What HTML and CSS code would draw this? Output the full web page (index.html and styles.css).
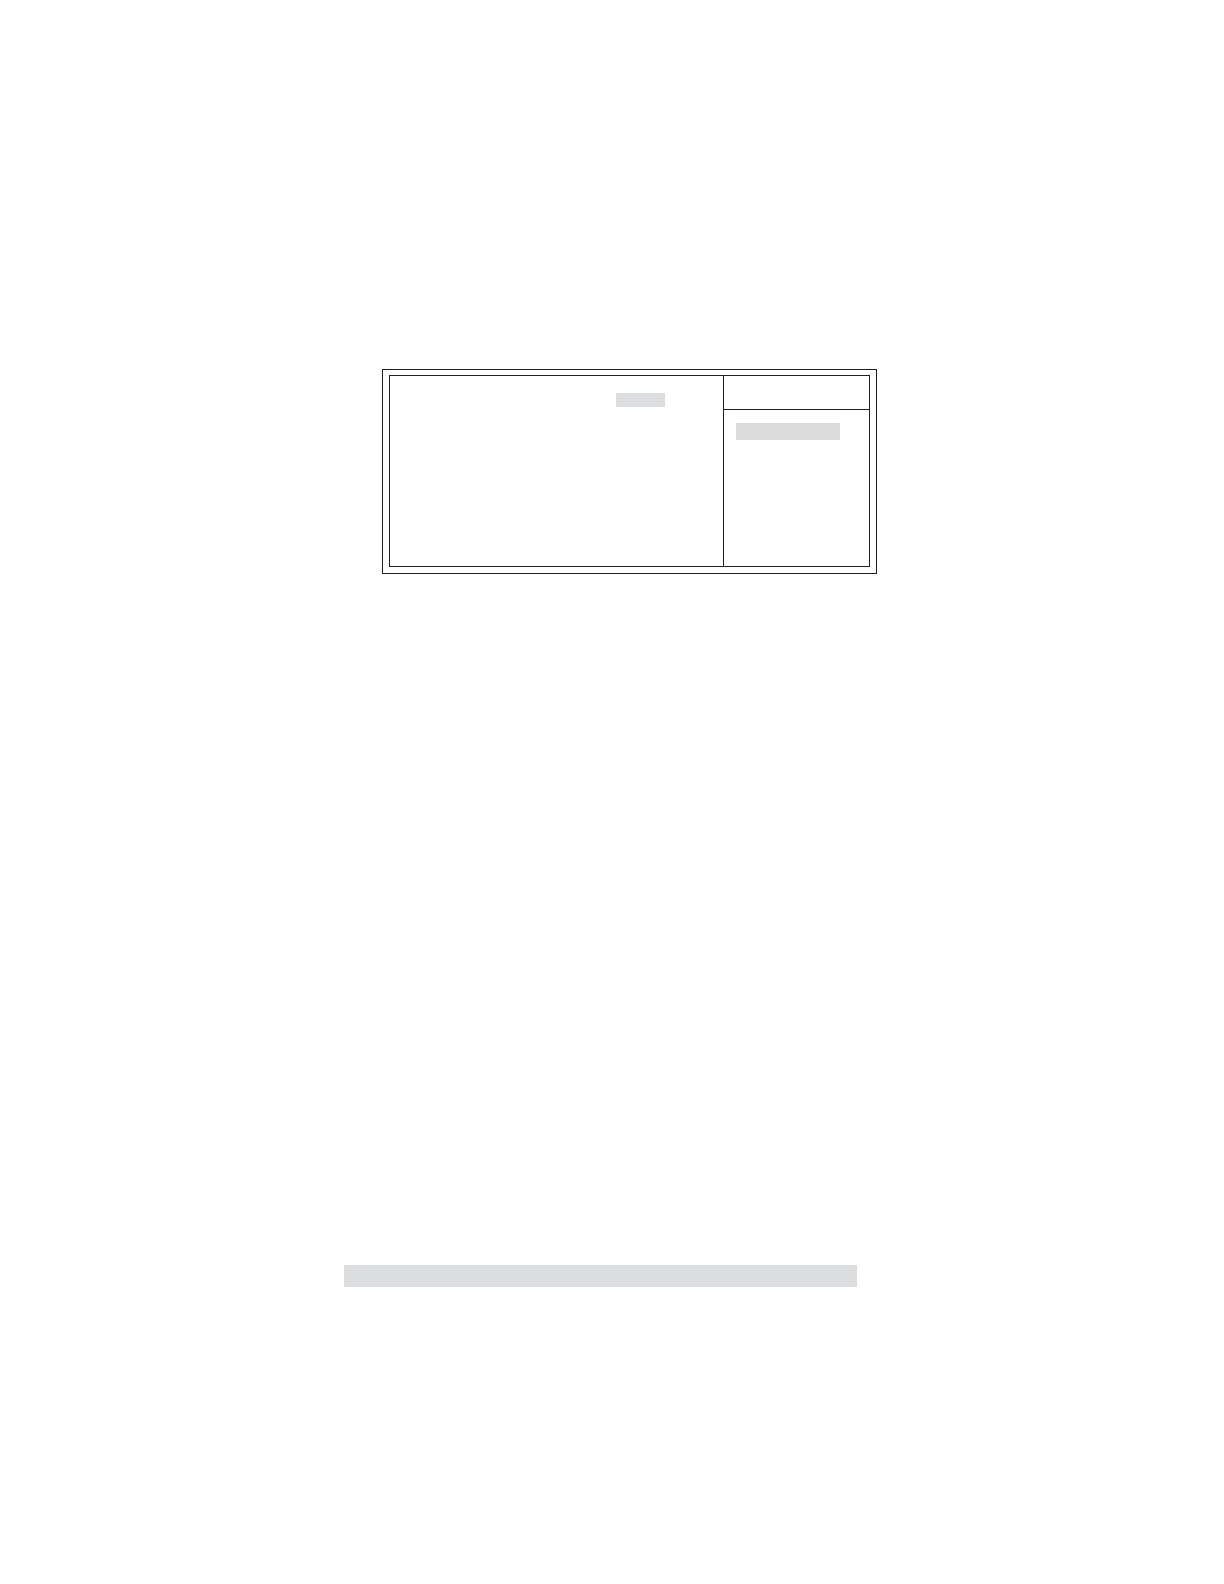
FILE: index.html
```html
<!DOCTYPE html>
<html lang="en">
<head>
  <meta charset="UTF-8">
  <meta name="viewport" content="width=device-width, initial-scale=1">
  <title>Setup</title>
  <link rel="stylesheet" href="styles.css">
</head>
<body>
  <main class="page">
    <section class="frame">
      <div class="screen">
        <div class="settings">
          <div class="selected-value"></div>
        </div>
        <aside class="help">
          <div class="help-header"></div>
          <div class="help-body">
            <div class="selected-help"></div>
          </div>
        </aside>
      </div>
    </section>
    <footer class="page-bar"></footer>
  </main>
</body>
</html>
```

FILE: styles.css
```css
* {
  box-sizing: border-box;
}
body {
  margin: 0;
  font-family: "Liberation Sans", Arial, sans-serif;
  background-color: #fff;
  color: #231f20;
}
.page {
  padding: 369px 347px 297px 344px;
}
/* Double frame */
.frame {
  margin-left: 38px;
  padding: 5px 6px 6px;
  border: 1px solid #231f20;
}
.screen {
  display: grid;
  grid-template-columns: 1fr 146px;
  min-height: 192px;
  border: 1px solid #231f20;
}
/* Left panel */
.settings {
  padding: 17px 58px 0 0;
}
.selected-value {
  width: 49px;
  height: 14px;
  margin-left: auto;
  background-color: #dcddde;
}
/* Right panel */
.help {
  border-left: 1px solid #231f20;
}
.help-header {
  height: 34px;
  border-bottom: 1px solid #231f20;
}
.help-body {
  padding: 13px 29px 0 12px;
}
.selected-help {
  height: 17px;
  background-color: #dcdcdc;
}
/* Bottom bar */
.page-bar {
  height: 22px;
  margin: 691px 20px 0 0;
  background-color: #dcddde;
}
```
